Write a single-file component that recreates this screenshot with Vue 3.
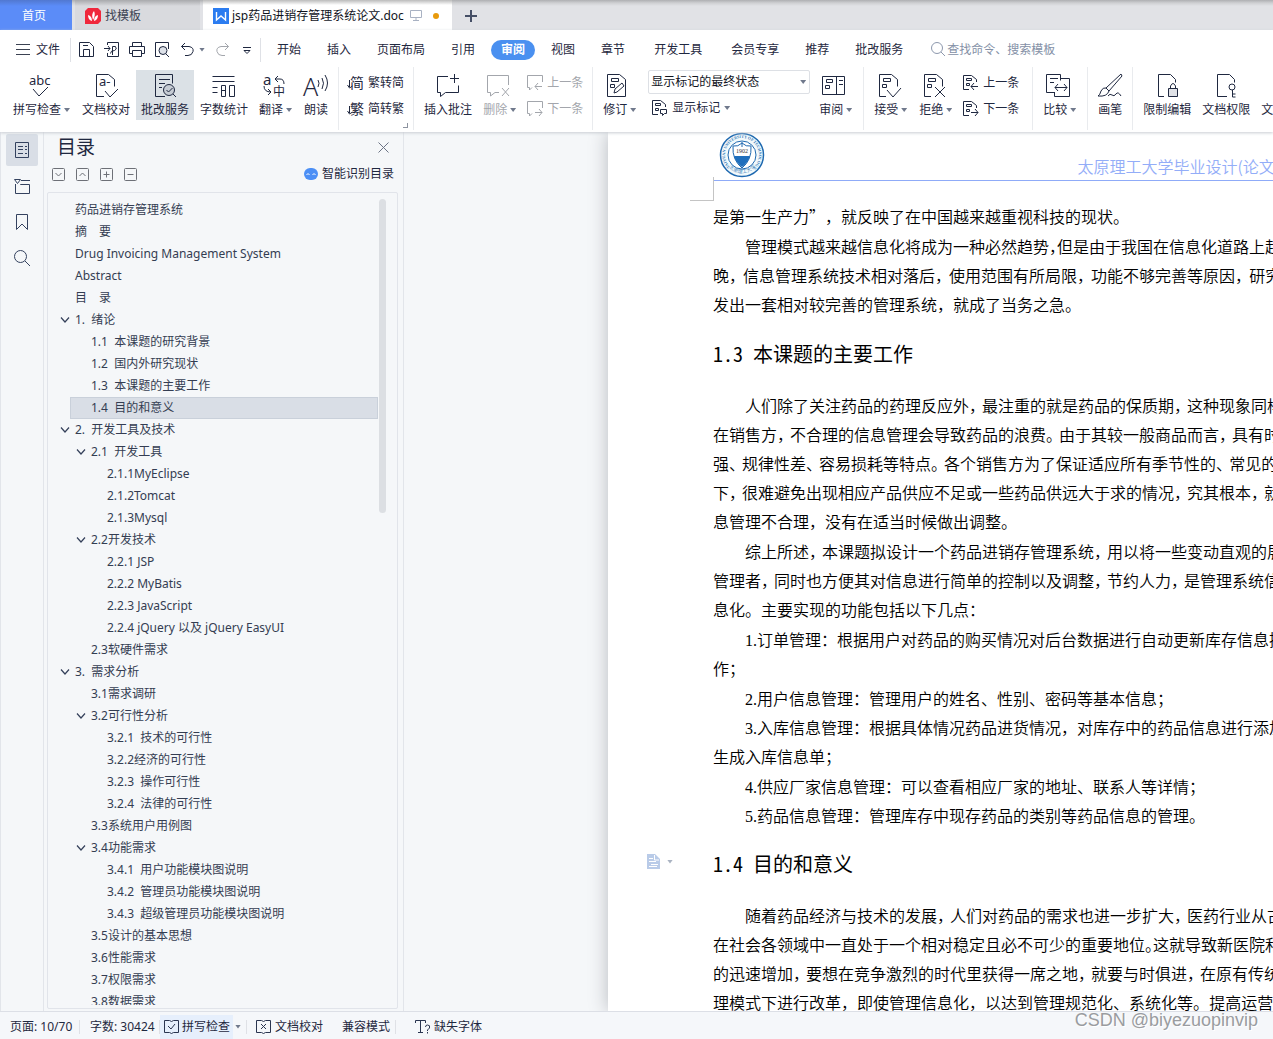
<script setup>
import { ref } from 'vue'

const icons = {
  spell: '<text x="1" y="11" font-size="13">abc</text><path d="M5 15l6 7 9-9"/>',
  proof: '<path d="M10 22.5H2.5V.5h12l6 5v7M11 17l5 6 8-8"/><text x="5" y="12" font-size="13">a-</text>',
  mark: '<path d="M12 22.5H2.5V.5h17v9M6 5.500h11M6 9.500h6M6 13.500h3"/><circle cx="16" cy="16" r="5.500" fill="#c6ccd4"/><path d="M13.500 16l2 2 4-4M20 20l3 3"/>',
  count: '<path d="M.5 2.500h22M.5 7.500h22M.5 13.500h5M.5 18.500h5M9.500 11.500h4v11h-4zM9.500 16.500h4M17.500 11.500h5v11h-5z"/>',
  translate: '<text x="1" y="11" font-size="15">a</text><text x="11" y="22" font-size="12">中</text><path d="M16 2l-3 3 3 3M13 5h5q4 0 4 5M2 12q0 6 7 6M6 15l3 3-3 3"/>',
  read: '<path d="M14 6q2 3 0 7M18 4q3 5 0 11M21 1q5 8 0 16"/><text class="thin" x="-1" y="22" font-size="25">A</text>',
  comment: '<path d="M12 2.500H1.500v16h3v4l5-4h13v-7M18.500 0v9M14 4.500h9"/>',
  remove: '<path d="M9 18.500L4.500 22v-3.500h-3v-17h21V11M16 14l7 8M23 14l-7 8M9 18.500h4"/>',
  revise: '<path d="M1.500.5h12l6 5v17h-18zM5.500 4.500h7v3h-7zM4.500 10.500h4v3h-4zM8 19l1-4 7-6 2 3-7 6z"/>',
  review: '<path d="M.5 2.500h22v18H.5zM14.500 2.500v18M4.500 5.500h6v3h-6zM3.500 11.500h4v3h-4zM17 6.500h4M17 10.500h4"/>',
  accept: '<path d="M9 22.500H2.500V.5h12l6 5v7M10 16l6 7 8-9M6.500 4.500h7v3h-7zM5.500 10.500h4v3h-4z"/>',
  reject: '<path d="M9 22.500H2.500V.5h12l6 5v7M13 13l10 10M23 13L13 23M6.500 4.500h7v3h-7zM5.500 10.500h4v3h-4z"/>',
  compare: '<path d="M9 18.500H.5V.5h14v6M8.500 22.500h15v-18h-9M8.500 22.500v-4M4 4.500h8M4 8.500h4M9 13.500h12M12 10l-3 3.500 3 3.500M18 10l3 3.500-3 3.500"/>',
  brush: '<path d="M23 0L8 14l3 3L24 2zM8 14q-3-1-5 3-1 4-3 5 9 1 11-5M10 22q2-3 4-1t4-1 5 2"/>',
  lock: '<path d="M9 22.500H3.500V.5h12l5 5v3"/><path d="M13.500 14.500h9v8h-9z" fill="#dfe1e6"/><path d="M15.500 14v-2q2.500-5 5 0v2"/>',
  permit: '<path d="M13 22.500H3.500V.5h12l5 5v3"/><circle cx="18" cy="13" r="3"/><path d="M18.500 16v7h3M18.500 20h3"/>',
  none: '',
  simp: '<path d="M1.500 5v7M-.5 10l2 3 3-2"/><text x="2" y="13" font-size="14">简</text>',
  trad: '<path d="M1.500 5v7M-.5 10l2 3 3-2"/><text x="2" y="13" font-size="14">繁</text>',
  prevc: '<path d="M5 12.500L2.500 15v-2.500h-2V.5h15V7M15 11.500H8M11 8l-3 3.500 3 3.500"/>',
  nextc: '<path d="M5 12.500L2.500 15v-2.500h-2V.5h15V7M8 11.500h7M12 8l3 3.500-3 3.500"/>',
  prevr: '<path d="M6 14.500H.5V.5h8l5 4V7M3.500 3.500h5v2h-5zM3.500 8.500h3v2h-3zM15 11.500H8M11 8l-3 3.500 3 3.500"/>',
  nextr: '<path d="M6 14.500H.5V.5h8l5 4V7M3.500 3.500h5v2h-5zM3.500 8.500h3v2h-3zM8 11.500h7M12 8l3 3.500-3 3.500"/>',
  showmark: '<path d="M6 14.500H.5V.5h8l5 4V7M3.500 3.500h5v2h-5zM3.500 8.500h3v2h-3zM8.500 9.500h6v4h-2l-2 2v-2h-2z"/>',
  save: '<path d="M.5 14.500V.5h10l4 4v10zM4.500 14V7.500h6V14M4 3.500h5"/>',
  output: '<path d="M3.500 3V.5h11v14h-11V11M0 6.500h6M4 4l2 2.500L4 9M8.500 13V4.500h3q2 3-1 4-4 0-4 3"/>',
  print: '<path d="M3.500 4.500v-4h9v4M3.500 11.500h-3v-7h15v7h-3M3.500 8.500h9v6h-9z"/>',
  preview: '<path d="M6 14.500H1.500V.5h13V7M12 12l3 3"/><circle cx="9" cy="8.500" r="4" fill="#dde1e8"/>',
  undo: '<path d="M5 1L1.500 4.500 5 8M1.500 4.500H9q5 1 4 5-1 4-5 4H5"/>',
  redo: '<path d="M11 1l3.500 3.500L11 8M14.500 4.500H7q-5 1-4 5 1 4 5 4h3"/>',
  more: '<path d="M4 5.500h8M5 8.500l3 3 3-3z"/>',
}

const ribbonTabs = ['开始', '插入', '页面布局', '引用', '审阅', '视图', '章节', '开发工具', '会员专享', '推荐', '批改服务']

const groups = [
  { items: [
    { icon: 'spell', label: '拼写检查', drop: true },
    { icon: 'proof', label: '文档校对' },
    { icon: 'mark', label: '批改服务', on: true },
    { icon: 'count', label: '字数统计' },
    { icon: 'translate', label: '翻译', drop: true },
    { icon: 'read', label: '朗读' },
  ] },
  { corner: true, items: [{ pair: [['simp', '繁转简'], ['trad', '简转繁']] }] },
  { items: [
    { icon: 'comment', label: '插入批注' },
    { icon: 'remove', label: '删除', drop: true, off: true },
    { off: true, pair: [['prevc', '上一条'], ['nextc', '下一条']] },
  ] },
  { items: [
    { icon: 'revise', label: '修订', drop: true },
    { view: true },
    { icon: 'review', label: '审阅', drop: true },
  ] },
  { wide: true, items: [
    { icon: 'accept', label: '接受', drop: true },
    { icon: 'reject', label: '拒绝', drop: true },
    { pair: [['prevr', '上一条'], ['nextr', '下一条']] },
  ] },
  { items: [{ icon: 'compare', label: '比较', drop: true }] },
  { items: [{ icon: 'brush', label: '画笔' }] },
  { items: [
    { icon: 'lock', label: '限制编辑' },
    { icon: 'permit', label: '文档权限' },
    { icon: 'none', label: '文档定稿' },
  ] },
]

const outline = [
  [1, '药品进销存管理系统'], [1, '摘　要'], [1, 'Drug Invoicing Management System'], [1, 'Abstract'], [1, '目　录'],
  [1, '1.  绪论', true],
  [2, '1.1  本课题的研究背景'], [2, '1.2  国内外研究现状'], [2, '1.3  本课题的主要工作'], [2, '1.4  目的和意义'],
  [1, '2.  开发工具及技术', true],
  [2, '2.1  开发工具', true], [3, '2.1.1MyEclipse'], [3, '2.1.2Tomcat'], [3, '2.1.3Mysql'],
  [2, '2.2开发技术', true], [3, '2.2.1 JSP'], [3, '2.2.2 MyBatis'], [3, '2.2.3 JavaScript'], [3, '2.2.4 jQuery 以及 jQuery EasyUI'],
  [2, '2.3软硬件需求'],
  [1, '3.  需求分析', true],
  [2, '3.1需求调研'], [2, '3.2可行性分析', true],
  [3, '3.2.1  技术的可行性'], [3, '3.2.2经济的可行性'], [3, '3.2.3  操作可行性'], [3, '3.2.4  法律的可行性'],
  [2, '3.3系统用户用例图'], [2, '3.4功能需求', true],
  [3, '3.4.1  用户功能模块图说明'], [3, '3.4.2  管理员功能模块图说明'], [3, '3.4.3  超级管理员功能模块图说明'],
  [2, '3.5设计的基本思想'], [2, '3.6性能需求'], [2, '3.7权限需求'], [2, '3.8数据需求'],
]
const selected = ref(9)
const state = ref('显示标记的最终状态')

// "~" before a mark sets it half width.
const intro = [
  { cont: true, lines: ['是第一生产力”，就反映了在中国越来越重视科技的现状。'] },
  { lines: ['管理模式越来越信息化将成为一种必然趋势~，但是由于我国在信息化道路上起步较', '晚，信息管理系统技术相对落后，使用范围有所局限，功能不够完善等原因，研究并', '发出一套相对较完善的管理系统，就成了当务之急。'] },
]
const work = [
  { lines: ['人们除了关注药品的药理反应外，最注重的就是药品的保质期，这种现象同样存', '在销售方，不合理的信息管理会导致药品的浪费。由于其较一般商品而言，具有时效', '强、规律性差、容易损耗等特点。各个销售方为了保证适应所有季节性的、常见的药', '下，很难避免出现相应产品供应不足或一些药品供远大于求的情况，究其根本，就是', '息管理不合理，没有在适当时候做出调整。'] },
  { lines: ['综上所述，本课题拟设计一个药品进销存管理系统，用以将一些变动直观的展示', '管理者，同时也方便其对信息进行简单的控制以及调整，节约人力，是管理系统信息', '息化。主要实现的功能包括以下几点：'] },
  { num: '1.', lines: ['订单管理：根据用户对药品的购买情况对后台数据进行自动更新库存信息操', '作；'] },
  { num: '2.', lines: ['用户信息管理：管理用户的姓名、性别、密码等基本信息；'] },
  { num: '3.', lines: ['入库信息管理：根据具体情况药品进货情况，对库存中的药品信息进行添加', '生成入库信息单；'] },
  { num: '4.', lines: ['供应厂家信息管理：可以查看相应厂家的地址、联系人等详情；'] },
  { num: '5.', lines: ['药品信息管理：管理库存中现存药品的类别等药品信息的管理。'] },
]
const aim = [
  { lines: ['随着药品经济与技术的发展，人们对药品的需求也进一步扩大，医药行业从古至', '在社会各领域中一直处于一个相对稳定且必不可少的重要地位~。这就导致新医院和药', '的迅速增加，要想在竞争激烈的时代里获得一席之地，就要与时俱进，在原有传统管', '理模式下进行改革，即使管理信息化，以达到管理规范化、系统化等。提高运营效率'] },
]
const sections = [
  { paras: intro },
  { num: '1.3 ', title: '本课题的主要工作', paras: work },
  { num: '1.4 ', title: '目的和意义', paras: aim, tool: true },
]
const split = (line) => line.split(/(~?[，。、])/).filter(Boolean).map((t) => ({
  text: t.replace('~', ''),
  kind: t[0] === '~' ? 'half' : /^[，。、]$/.test(t) ? 'punct' : '',
}))
</script>

<template>
  <div class="app">
    <nav class="tabs">
      <button class="tab home">首页</button>
      <button class="tab templates">
        <svg width="16" height="16" viewBox="0 0 16 16"><path d="M3 0h10l3 3v10l-3 3H0V3z" fill="#f0283c" /><path d="M3 7q4 1 4 6-4-1-4-6zM8 12Q6 6 9 3q2 4-1 9zM9 13q0-5 4-6 0 5-4 6z" fill="#fff" /></svg>
        <span>找模板</span>
      </button>
      <button class="tab doc">
        <svg width="16" height="16" viewBox="0 0 16 16"><path d="M0 0h16v16H0z" fill="#2b7cf0" /><path d="M3.500 4v8L8 8l4.500 4V4" fill="none" stroke="#fff" stroke-width="1.400" /></svg>
        <span class="name">jsp药品进销存管理系统论文.doc</span>
        <svg class="screen" width="12" height="11" viewBox="0 0 12 11" fill="none" stroke="#a9b2c3"><path d="M.5.5h11v7H.5zM6 8v2M3 10.500h6" /></svg>
        <i class="dot"></i>
      </button>
      <button class="tab add" aria-label="新建">
        <svg width="12" height="12" viewBox="0 0 12 12" stroke="#454f66" stroke-width="2"><path d="M6 0v12M0 6h12" /></svg>
      </button>
    </nav>

    <header class="ribbon">
      <div class="menu">
        <button class="file">
          <svg width="14" height="11" viewBox="0 0 14 11" stroke="#3b4252"><path d="M0 .5h14M0 5.500h14M0 10.500h14" /></svg>
          <span>文件</span>
        </button>
        <i class="rule"></i>
        <div class="quick">
          <button v-for="n in ['save', 'output', 'print', 'preview']" :key="n" :aria-label="n"><svg class="glyph" width="16" height="16" viewBox="0 0 16 16" v-html="icons[n]"></svg></button>
          <button class="undo" aria-label="undo"><svg class="glyph" width="16" height="16" viewBox="0 0 16 16" v-html="icons.undo"></svg><i class="arrow"></i></button>
          <button class="off" aria-label="redo"><svg class="glyph" width="16" height="16" viewBox="0 0 16 16" v-html="icons.redo"></svg></button>
          <button aria-label="more"><svg class="glyph" width="16" height="16" viewBox="0 0 16 16" v-html="icons.more"></svg></button>
        </div>
        <i class="rule"></i>
        <div class="pages">
          <button v-for="t in ribbonTabs" :key="t" :class="{ current: t === '审阅', roomy: t === '开发工具' || t === '会员专享' }"><span>{{ t }}</span></button>
        </div>
        <label class="search">
          <svg width="15" height="15" viewBox="0 0 15 15" fill="none" stroke="#8d98ad"><circle cx="6" cy="6" r="5.500" /><path d="M10 10l4 4" /></svg>
          <input type="text" placeholder="查找命令、搜索模板" />
        </label>
      </div>

      <div class="tools">
        <div v-for="(g, gi) in groups" :key="gi" class="group" :class="{ wide: g.wide }">
          <template v-for="(it, i) in g.items" :key="i">
            <div v-if="it.pair" class="stack" :class="{ off: it.off }">
              <button v-for="p in it.pair" :key="p[1]" class="small">
                <svg class="glyph" width="16" height="16" viewBox="0 0 16 16" v-html="icons[p[0]]"></svg><span>{{ p[1] }}</span>
              </button>
            </div>
            <div v-else-if="it.view" class="view">
              <div class="choice">
                <select v-model="state" aria-label="显示状态"><option>显示标记的最终状态</option></select>
                <i class="arrow"></i>
              </div>
              <button class="small">
                <svg class="glyph" width="16" height="16" viewBox="0 0 16 16" v-html="icons.showmark"></svg><span>显示标记</span><i class="arrow"></i>
              </button>
            </div>
            <button v-else class="tool" :class="{ on: it.on, off: it.off, drop: it.drop }">
              <svg class="glyph" width="24" height="24" viewBox="0 0 24 24" v-html="icons[it.icon]"></svg>
              <span class="label">{{ it.label }}<i v-if="it.drop" class="arrow"></i></span>
            </button>
          </template>
          <i v-if="g.corner" class="corner"></i>
        </div>
      </div>
    </header>

    <main class="work">
      <aside class="rail">
        <button class="on" aria-label="目录"><svg width="16" height="16" viewBox="0 0 16 16" fill="none" stroke="#34425f"><path d="M1.500.5h13v15h-13zM4 4.500h5M11 4.500h2M4 7.500h5M11 7.500h2M4 11.500h5M11 11.500h2" /></svg></button>
        <button aria-label="章节"><svg width="18" height="16" viewBox="0 0 18 16" fill="none" stroke="#34425f"><path d="M2.500 6v9.500h14v-9h-9V6M8 2.500h9M1.500 1.500h6l-3 4z" /></svg></button>
        <button aria-label="书签"><svg width="16" height="18" viewBox="0 0 16 18" fill="none" stroke="#34425f"><path d="M2.500 1.500h11v15L8 11l-5.500 5.500z" /></svg></button>
        <button aria-label="查找"><svg width="16" height="16" viewBox="0 0 16 16" fill="none" stroke="#34425f"><circle cx="6.500" cy="6.500" r="6" /><path d="M11 11l5 5" /></svg></button>
      </aside>

      <section class="panel">
        <div class="title">
          <h2>目录</h2>
          <button aria-label="关闭"><svg width="11" height="11" viewBox="0 0 11 11" stroke="#6b7385"><path d="M.5.5l10 10M10.500.5l-10 10" /></svg></button>
        </div>
        <div class="actions">
          <button v-for="d in ['M3.500 5l3 3 3-3', 'M3.500 8l3-3 3 3', 'M3.500 6.500h6M6.500 3.500v6', 'M3.500 6.500h6']" :key="d" :aria-label="d">
            <svg width="13" height="13" viewBox="0 0 13 13" fill="none" stroke="#6d7077"><rect x=".5" y=".5" width="12" height="12" rx="1" /><path :d="d" /></svg>
          </button>
          <button class="smart">
            <svg width="14" height="12" viewBox="0 0 14 12"><rect width="14" height="12" rx="6" fill="#4c8ff5" /><path d="M2.500 7q1.500-3 3 0M8.500 7q1.500-3 3 0" fill="none" stroke="#fff" /></svg>
            <span>智能识别目录</span>
          </button>
        </div>
        <div class="tree">
          <ul>
            <li v-for="(row, i) in outline" :key="i" :class="['l' + row[0], { sel: selected === i }]" @click="selected = i">
              <svg width="10" height="6" viewBox="0 0 10 6" fill="none" stroke="#34405a" stroke-width="1.200"><path v-if="row[2]" d="M1 .5L5 5 9 .5" /></svg>
              <span>{{ row[1] }}</span>
            </li>
          </ul>
          <i class="thumb"></i>
        </div>
      </section>

      <div class="canvas">
        <article class="page">
          <div class="head">
            <svg class="seal" width="46" height="46" viewBox="0 0 46 46">
              <defs><path id="ring" d="M11 35a17 17 0 1 1 24 0" /><path id="foot" d="M8 33a18 18 0 0 0 30 0" /></defs>
              <circle cx="23" cy="23" r="21.500" fill="#f2f9fb" stroke="#1f69b0" stroke-width="1.500" />
              <circle cx="23" cy="23" r="14" fill="#fff" stroke="#1f69b0" />
              <text font-family="Liberation Serif, serif" font-size="4" font-weight="700" fill="#2f78b8"><textPath href="#ring">TAIYUAN UNIVERSITY OF TECHNOLOGY</textPath></text>
              <text font-family="Noto Sans CJK SC, sans-serif" font-size="5" fill="#2f78b8"><textPath href="#foot" startOffset="3">太原理工大学</textPath></text>
              <path d="M14 14q5 1 9-3 4 4 9 3 1 14-9 22-10-8-9-22z" fill="#fff" stroke="#1f69b0" />
              <path d="M15 24h16q-2 7-8 11-6-4-8-11z" fill="#1f6fbd" /><path d="M23 10v5" stroke="#1f69b0" />
              <text x="23" y="21" text-anchor="middle" font-family="Liberation Serif, serif" font-size="6" fill="#333">1902</text>
            </svg>
            <span>太原理工大学毕业设计(论文)</span>
            <i class="crop"></i>
          </div>
          <section v-for="(s, si) in sections" :key="si" class="section">
            <h3 v-if="s.title">
              <span v-if="s.tool" class="float">
                <svg width="13" height="15" viewBox="0 0 13 15"><path d="M0 0h8l5 5v10H0z" fill="#b9cbe8" /><path d="M2 4.500h4M2 7.500h7M4 10.500h7M2 12.500h8M7.500 1v5H12" fill="none" stroke="#fff" /></svg>
                <i class="arrow"></i>
              </span>
              <span class="no">{{ s.num }}</span>{{ s.title }}
            </h3>
            <p v-for="(p, pi) in s.paras" :key="pi" :class="{ indent: !p.cont, multi: p.cont || p.lines.length > 1 }">
              <span v-for="(l, li) in p.lines" :key="li" class="line" :class="{ full: !p.num && li < p.lines.length - 1 }"><span v-if="p.num && li === 0" class="num">{{ p.num }}</span><span v-for="(t, ti) in split(l)" :key="ti" :class="t.kind">{{ t.text }}</span></span>
            </p>
          </section>
        </article>
      </div>
    </main>

    <footer class="status">
      <span class="cell">页面: 10/70</span><i class="rule"></i>
      <span class="cell">字数: 30424</span><i class="rule"></i>
      <button class="check"><svg width="15" height="14" viewBox="0 0 15 14" fill="none" stroke="#2a3550"><path d="M5.500.5h-5v12h5l2 1 2-1h5V.5h-5l-2 1zM4 6l3 3 4-5" /></svg><span>拼写检查</span></button>
      <i class="arrow"></i><i class="rule"></i>
      <button class="item"><svg width="15" height="14" viewBox="0 0 15 14" fill="none" stroke="#2a3550"><path d="M5.500.5h-5v12h5l2 1 2-1h5V.5h-5l-2 1zM5 4l5 5M10 4l-5 5" /></svg><span>文档校对</span></button>
      <button class="item">兼容模式</button><i class="rule"></i>
      <button class="item fonts"><svg width="16" height="14" viewBox="0 0 16 14" fill="none" stroke="#2a3550"><path d="M.5 3V.5h10V3M5.500.5v12M3 12.500h5M10.500 7q0-2 2-2 3 0 2 3l-2 2v1M12.500 12v1.500" /></svg><span>缺失字体</span></button>
      <span class="mark">CSDN @biyezuopinvip</span>
    </footer>
  </div>
</template>

<style>
body { background: #f5f6f9; }
</style>

<style scoped>
* { box-sizing: border-box; }
.app { display: flex; flex-direction: column; height: 100vh; overflow: hidden; font: 12px/18px "Noto Sans", "Noto Sans CJK SC", sans-serif; color: #1f2840; background: #f5f7f9; }
button { display: flex; align-items: center; padding: 0; border: 0; background: none; color: inherit; font: inherit; white-space: nowrap; flex: none; }
svg { display: block; flex: none; overflow: visible; }
.glyph { fill: none; stroke: currentColor; }
.glyph :deep(text) { fill: currentColor; stroke: none; }
.glyph :deep(.thin) { font-weight: 300; }
.off { color: #a3a6ac; }
.arrow { display: block; flex: none; width: 6px; height: 4px; background: #70798c; clip-path: polygon(0 0, 100% 0, 50% 100%); }
.rule { flex: none; width: 1px; background: #dfe1e6; }

.tabs { display: flex; flex: none; height: 30px; background: linear-gradient(#aeafb2, #cfd0d3 3px, #e1e2e6 6px); }
.tab { height: 30px; gap: 4px; padding-top: 1px; }
.home { width: 72px; margin-right: 3px; padding-left: 22px; color: #fff; background: linear-gradient(#5178d0, #5b8cf8 6px); }
.templates { width: 125px; margin-right: 3px; padding-left: 10px; color: #3b4252; background: linear-gradient(#a8a9ac, #d9dade 6px); }
.doc { width: 249px; padding-left: 10px; color: #10131c; background: linear-gradient(#bbb, #fff 5px); gap: 3px; }
.screen { margin-left: 3px; }
.dot { width: 6px; height: 6px; margin-left: 8px; border-radius: 3px; background: #e89a0c; }
.add { padding-left: 13px; }

.ribbon { flex: none; height: 102px; background: #fff; position: relative; z-index: 2; box-shadow: 0 1px 3px #c9ccd2; }
.menu { display: flex; height: 37px; padding-top: 2px; align-items: center; }
.menu .rule { height: 24px; }
.file { padding-left: 16px; gap: 6px; margin-right: 10px; }
.quick { display: flex; padding: 0 4px 0 8px; width: 189px; }
.quick button { width: 25px; height: 24px; margin-right: 0; }
.quick button:nth-child(4) { width: 26px; }
.quick .undo { width: 34px; gap: 3px; }
.pages { display: flex; padding-left: 3px; }
.pages button { padding: 0 13px; height: 24px; }
.pages .roomy { padding-left: 16px; }
.pages .current span { margin: 0 -10px; padding: 1px 10px; border-radius: 10px; background: #4a90f0; color: #fff; font-weight: 700; }
.search { display: flex; align-items: center; padding-left: 15px; }
.search input { width: 130px; padding: 0; margin-left: 1px; border: 0; outline: 0; background: none; font: inherit; color: #8490a6; }
.search input::placeholder { color: #8490a6; opacity: 1; }

.tools { display: flex; height: 65px; padding: 0 0 2px 8px; overflow: hidden; }
.group { display: flex; flex: none; align-items: flex-start; gap: 1px; padding-top: 3px; position: relative; }
.group + .group { margin-left: 5px; padding-left: 5px; border-left: 1px solid #e9ebee; }
.group.wide { padding-right: 4px; }
.tool { flex-direction: column; height: 50px; padding: 4px 5px 0; }
.tool.on { background: #dbe1e6; }
.tool.drop { padding-right: 6px; }
.label { display: flex; align-items: center; margin-top: 3px; }
.label .arrow { margin-left: 3px; }
.drop .glyph { margin-right: 4px; }
.stack, .view { display: flex; flex-direction: column; gap: 2px; }
.stack { padding: 1px 4px 0; }
.small { height: 24px; gap: 4px; }
.view { width: 162px; margin: 0 3px 0 5px; }
.view .small { padding-left: 4px; }
.choice { display: flex; align-items: center; height: 24px; border: 1px solid #dde0e5; border-radius: 2px; }
.choice select { flex: 1; height: 22px; padding: 0 2px; border: 0; outline: 0; appearance: none; background: none; font: inherit; color: #10131c; }
.choice .arrow { margin-right: 3px; }
.corner { position: absolute; right: 0; bottom: 2px; width: 5px; height: 5px; border: solid #8d93a0; border-width: 0 1px 1px 0; }

.work { display: flex; flex: 1; min-height: 0; }
.rail { display: flex; flex-direction: column; align-items: center; flex: none; width: 44px; padding-top: 2px; gap: 4px; border: solid #e2e5ea; border-width: 0 1px; }
.rail button { width: 32px; height: 32px; justify-content: center; border-radius: 2px; }
.rail .on { background: #d9dee6; }
.panel { display: flex; flex-direction: column; flex: none; width: 360px; border-right: 1px solid #e2e5ea; }
.title { display: flex; justify-content: space-between; align-items: center; height: 30px; padding: 0 14px 0 13px; }
.title h2 { margin: 0; font-size: 19px; font-weight: 400; line-height: 30px; }
.actions { display: flex; align-items: center; height: 24px; padding: 0 9px 0 8px; gap: 11px; }
.smart { margin-left: auto; gap: 4px; }
.tree { display: flex; flex: 1; min-height: 0; margin: 6px 5px 2px 3px; padding: 6px 11px 3px 0; border: 1px solid #e1e4ea; border-radius: 2px; }
.tree ul { flex: 1; margin: 0; padding: 0; list-style: none; overflow: hidden; }
.tree li { display: flex; align-items: center; height: 22px; padding-left: 12px; color: #343d52; white-space: pre; cursor: default; }
.tree li span { margin-left: 5px; }
.tree .l2 { padding-left: 28px; }
.tree .l3 { padding-left: 44px; }
.tree .sel { margin-left: 22px; padding-left: 5px; border: 1px solid #c9d0da; background: #d9dee6; }
.thumb { width: 7px; height: 314px; margin-left: 1px; border-radius: 4px; background: #dcdfe3; }

.canvas { flex: 1; min-width: 0; padding-left: 204px; overflow: hidden; }
.page { height: 100%; padding-left: 105px; overflow: hidden; background: #fff; color: #000; box-shadow: 0 0 18px #b7babf; font: 350 16px/29px "Noto Sans CJK SC", sans-serif; text-spacing-trim: space-all; white-space: nowrap; }
.head { position: relative; display: flex; justify-content: space-between; height: 49px; margin-bottom: 21px; padding-left: 6px; border-bottom: 1px solid #8fabf8; color: #93adf8; }
.head span { margin: 20px -7px 0 0; }
.crop { position: absolute; left: -23px; top: 45px; width: 24px; height: 24px; border: solid #c4c4c4; border-width: 0 1px 1px 0; }
h3 { position: relative; margin: 0; padding-bottom: 3px; font-size: 20px; font-weight: 400; line-height: 68px; }
.no { font-family: "Noto Sans Mono CJK SC", "Noto Sans CJK SC", monospace; white-space: pre; }
.float { position: absolute; left: -66px; top: 24px; display: flex; align-items: center; gap: 7px; }
.float .arrow { background: #aab3c2; }
p { margin: 0; }
.line { display: block; height: 29px; }
.indent .line:first-child { padding-left: 32px; }
.multi { padding-bottom: 1px; }
.num { font-family: "Liberation Serif", serif; font-weight: 400; line-height: 16px; }
.full .punct { margin-right: -3px; }
.section:nth-of-type(1) .full .punct { margin-right: -2px; }
.half { font-feature-settings: "halt"; }

.status { position: relative; z-index: 2; display: flex; align-items: center; flex: none; height: 28px; padding: 2px 0 0 10px; border-top: 1px solid #dcdfe6; background: #f5f7fa; }
.status .rule { height: 14px; }
.cell { min-width: 65px; margin-right: 4px; }
.cell + .rule + .cell { margin-left: 10px; }
.check { height: 24px; padding: 0 3px 0 4px; gap: 3px; background: #e6effc; }
.status > .arrow { margin: 0 5px 0 2px; }
.item { margin-left: 9px; gap: 4px; }
.item + .item { margin: 0 5px 0 19px; }
.fonts { margin-left: 19px; gap: 3px; }
.mark { position: absolute; right: 15px; top: -4px; font: 18px/24px "Liberation Sans", sans-serif; color: #9a9ca0; text-shadow: 1px 1px 0 #fff; }
</style>
